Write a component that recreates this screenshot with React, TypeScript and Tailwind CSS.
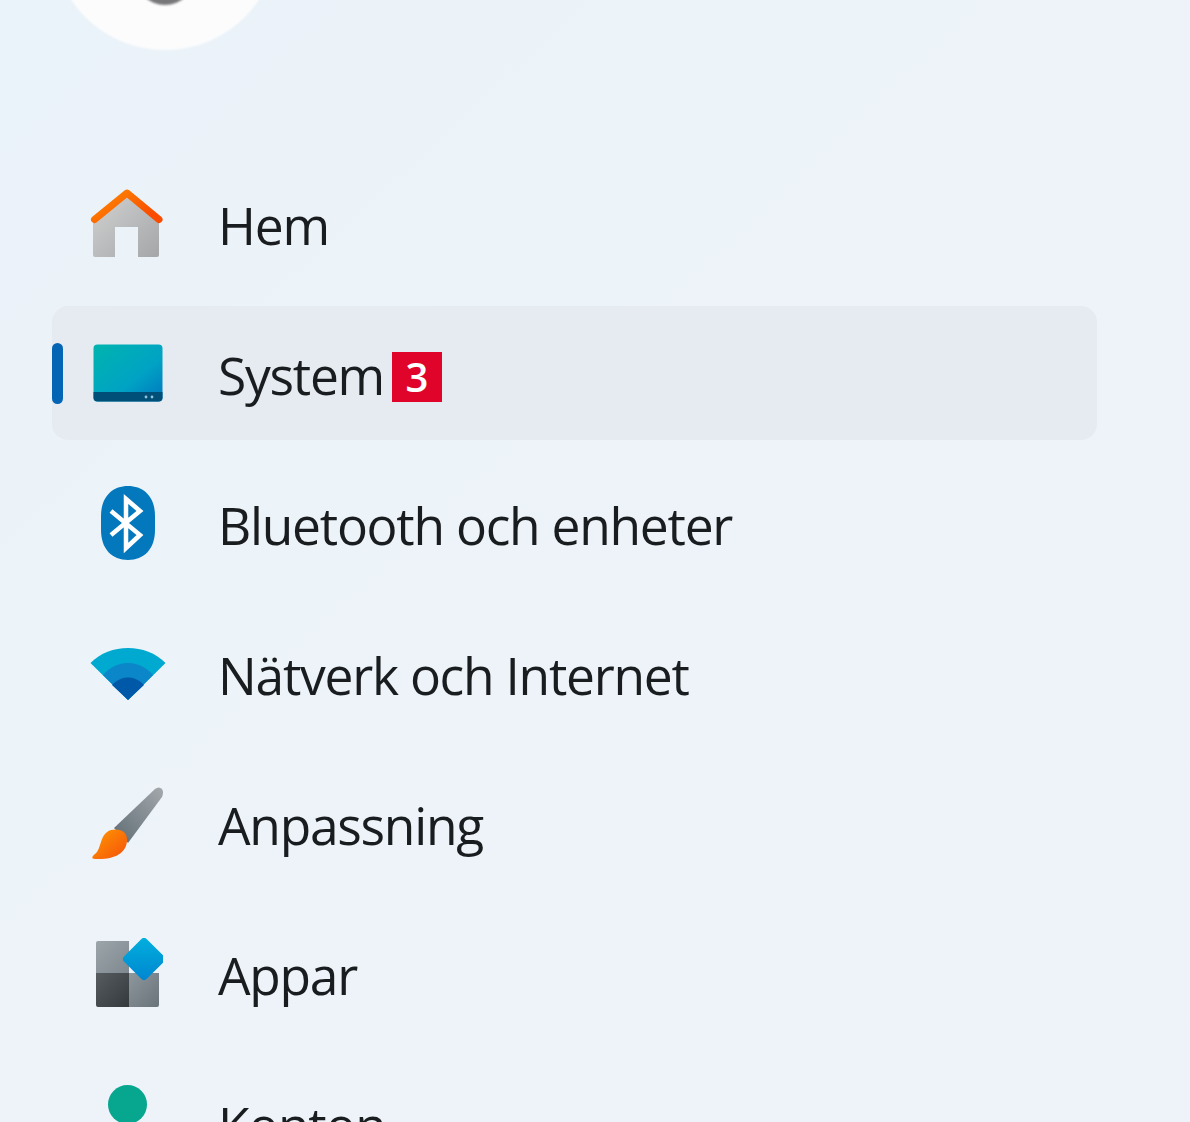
const labelClass = "mt-[6px] font-['Open_Sans','Noto_Sans',sans-serif] text-[51.5px] leading-none tracking-[-1.25px] font-[375] text-[#1a1d20]";

function Home() {
  return (
    <svg width="76" height="74" viewBox="0 0 76 74">
      <defs>
        <linearGradient id="hb" x1="0" y1="0" x2="1" y2="1">
          <stop offset="0" stopColor="#d2d2d2" />
          <stop offset="1" stopColor="#a4a6a8" />
        </linearGradient>
        <linearGradient id="hr" x1="0" y1="0" x2="1" y2="0.6">
          <stop offset="0" stopColor="#ff8c00" />
          <stop offset="1" stopColor="#f94c00" />
        </linearGradient>
      </defs>
      <path d="M3 36 L37 8 L69 36 V69 Q69 71 67 71 H48 V41 H25 V71 H5 Q3 71 3 69 Z" fill="url(#hb)" />
      <path d="M4.5 33.5 L37 7 L69 33.5" fill="none" stroke="url(#hr)" strokeWidth="7" strokeLinecap="round" strokeLinejoin="round" />
    </svg>
  );
}

function Monitor() {
  return (
    <svg width="70" height="58" viewBox="0 0 70 58">
      <defs>
        <linearGradient id="mb" x1="0" y1="0" x2="1" y2="1">
          <stop offset="0" stopColor="#00b4ae" />
          <stop offset="0.6" stopColor="#00a3c4" />
          <stop offset="1" stopColor="#0077c0" />
        </linearGradient>
      </defs>
      <rect x="0.5" y="0.5" width="69" height="57" rx="4" fill="url(#mb)" />
      <path d="M0.5 48 H69.5 V53.5 Q69.5 57.5 65.5 57.5 H4.5 Q0.5 57.5 0.5 53.5 Z" fill="#004f78" />
      <circle cx="53" cy="53" r="1.4" fill="#8fc4dc" />
      <circle cx="59" cy="53" r="1.4" fill="#8fc4dc" />
    </svg>
  );
}

function Bluetooth() {
  return (
    <svg width="58" height="76" viewBox="0 0 58 76">
      <path d="M29 1 C45 1 56 12 56 31 V45 C56 64 45 75 29 75 C13 75 2 64 2 45 V31 C2 12 13 1 29 1 Z" fill="#0378bd" />
      <path d="M12 26 L41 50 L27 63 V14 L41 26 L12 50" fill="none" stroke="#ffffff" strokeWidth="4.5" strokeLinejoin="miter" />
    </svg>
  );
}

function Wifi() {
  return (
    <svg width="76" height="56" viewBox="0 0 76 56">
      <path d="M0.5 18 C20 -2 56 -2 75.5 18 L38 55 Z" fill="#00a9cf" />
      <path d="M13 30 C27 14 49 14 63 30 L38 55 Z" fill="#0b86c9" />
      <path d="M22 40 C31 30 45 30 54 40 L38 55 Z" fill="#0059a8" />
    </svg>
  );
}

function Brush() {
  return (
    <svg width="74" height="74" viewBox="0 0 74 74">
      <defs>
        <linearGradient id="bh" x1="0" y1="1" x2="1" y2="0">
          <stop offset="0" stopColor="#5f6c74" />
          <stop offset="1" stopColor="#a3a8ac" />
        </linearGradient>
        <linearGradient id="bt" x1="0" y1="0" x2="1" y2="1">
          <stop offset="0" stopColor="#ff9a00" />
          <stop offset="1" stopColor="#f5500c" />
        </linearGradient>
      </defs>
      <path d="M23 42 L64 3 Q68 0 71 3 Q73 6 71 11 L37 57 Z" fill="url(#bh)" />
      <path d="M20 44 C28 42 37 45 36 55 C35 68 22 74 4 73 C0 73 1 70 4 68 C11 63 8 48 20 44 Z" fill="url(#bt)" />
    </svg>
  );
}

function Apps() {
  return (
    <svg width="70" height="70" viewBox="0 0 70 70">
      <defs>
        <linearGradient id="a1" x1="0" y1="0" x2="1" y2="1"><stop offset="0" stopColor="#9ca5aa" /><stop offset="1" stopColor="#7e888e" /></linearGradient>
        <linearGradient id="a2" x1="0" y1="0" x2="1" y2="1"><stop offset="0" stopColor="#565c60" /><stop offset="1" stopColor="#34393c" /></linearGradient>
        <linearGradient id="a3" x1="0" y1="0" x2="1" y2="1"><stop offset="0" stopColor="#8e979c" /><stop offset="1" stopColor="#69737a" /></linearGradient>
        <linearGradient id="a4" x1="0" y1="0" x2="1" y2="1"><stop offset="0" stopColor="#00b0de" /><stop offset="1" stopColor="#0085d0" /></linearGradient>
      </defs>
      <path d="M3 5 Q3 3 5 3 H36 V35 H3 Z" fill="url(#a1)" />
      <path d="M3 35 H36 V69 H5 Q3 69 3 67 Z" fill="url(#a2)" />
      <path d="M36 35 H66 V67 Q66 69 64 69 H36 Z" fill="url(#a3)" />
      <rect x="35" y="5" width="32" height="32" rx="4" transform="rotate(45 51 21)" fill="url(#a4)" />
    </svg>
  );
}

function Row({ icon, label, badge, active }: { icon: React.ReactNode; label: string; badge?: string; active?: boolean }) {
  return (
    <div className={`flex h-[134px] shrink-0 items-center rounded-2xl ${active ? "bg-[#e6ebf2]" : ""}`}>
      <div className={`h-[61px] w-[11px] shrink-0 rounded-md ${active ? "bg-[#0565b5]" : ""}`} />
      <div className="flex w-[155px] shrink-0 items-center justify-center pr-[26px]">{icon}</div>
      <span className={labelClass}>{label}</span>
      {badge && (
        <span className="mt-[8px] ml-[8px] flex h-[50px] w-[50px] items-center justify-center bg-[#e0042b] font-['Open_Sans',sans-serif] text-[40px] leading-none font-semibold text-white">
          {badge}
        </span>
      )}
    </div>
  );
}

export default function App() {
  return (
    <div className="h-[1122px] w-[1190px] overflow-hidden bg-gradient-to-br from-[#eaf3f9] via-[#edf3f9] to-[#eef3fa]">
      <div className="ml-[52px] flex h-[156px] flex-col">
        <div className="relative -mt-[176px] h-[226px] w-[226px] shrink-0 rounded-full bg-[#fcfcfd] blur-[1px]">
          <div className="absolute bottom-[45px] left-[83px] h-[60px] w-[60px] rounded-full bg-[#77777a]" />
        </div>
      </div>
      <div className="ml-[52px] flex w-[1045px] flex-col gap-4">
        <Row icon={<Home />} label="Hem" />
        <Row icon={<Monitor />} label="System" badge="3" active />
        <Row icon={<Bluetooth />} label="Bluetooth och enheter" />
        <Row icon={<Wifi />} label="Nätverk och Internet" />
        <Row icon={<Brush />} label="Anpassning" />
        <Row icon={<Apps />} label="Appar" />
        <div className="flex h-[134px] shrink-0 items-center">
          <div className="w-[11px] shrink-0" />
          <div className="flex w-[155px] shrink-0 justify-center pr-[26px]">
            <div className="-mt-[38px] h-[39px] w-[39px] rounded-full bg-[#06a68f]" />
          </div>
          <span className={labelClass}>Konton</span>
        </div>
      </div>
    </div>
  );
}
